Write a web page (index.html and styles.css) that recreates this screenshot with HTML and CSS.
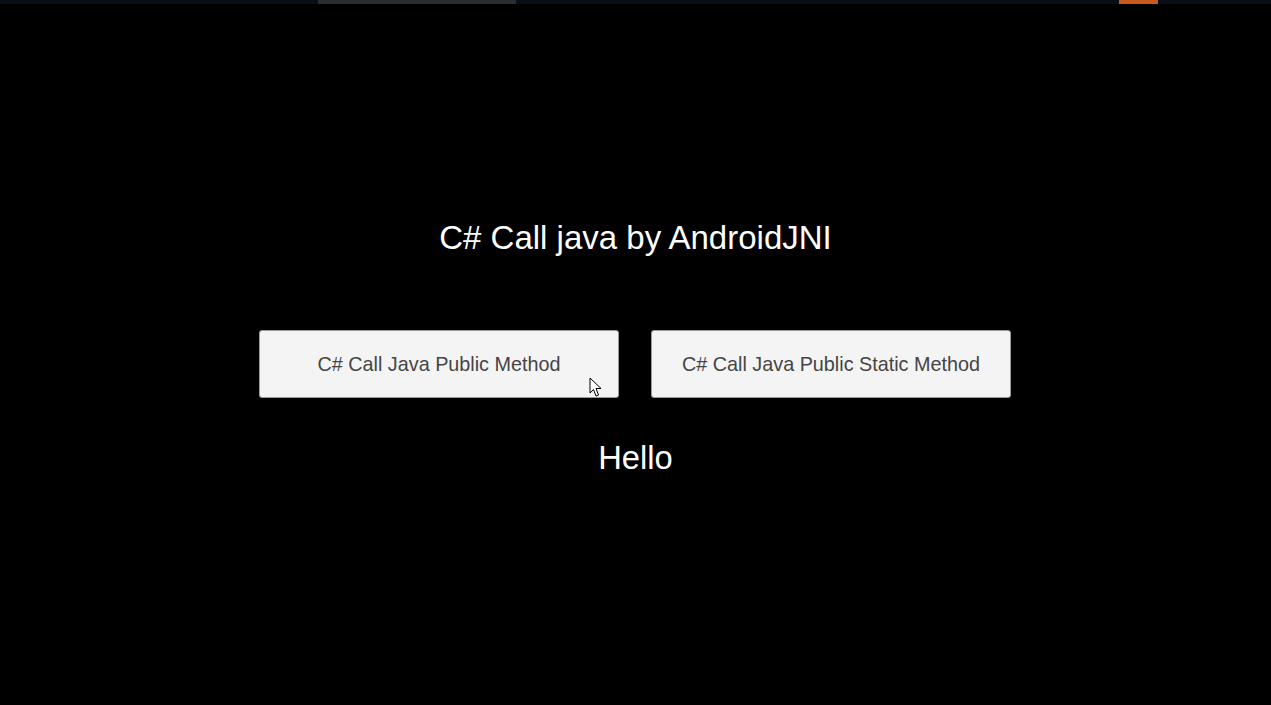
FILE: index.html
```html
<!DOCTYPE html>
<html>
<head>
<meta charset="utf-8">
<link rel="stylesheet" href="styles.css">
</head>
<body>
<div class="topbar">
  <div class="seg seg-a"></div>
  <div class="seg seg-gray"></div>
  <div class="seg seg-b"></div>
  <div class="seg seg-orange"></div>
  <div class="seg seg-c"></div>
</div>
<main class="stage">
  <h1 class="title">C# Call java by AndroidJNI</h1>
  <div class="buttons">
    <button class="btn">C# Call Java Public Method</button>
    <button class="btn">C# Call Java Public Static Method</button>
  </div>
  <div class="result">Hello</div>
</main>
<svg class="cursor" width="14" height="22" viewBox="0 0 14 22">
  <path d="M1 1 L1 16 L4.5 12.5 L7 19 L9.5 18 L7 11.5 L12 11.5 Z" fill="#fff" stroke="#000" stroke-width="1" stroke-linejoin="round"/>
</svg>
</body>
</html>
```
FILE: styles.css
```css
html, body {
  margin: 0;
  padding: 0;
  background: #000;
  height: 100%;
  overflow: hidden;
  font-family: "Liberation Sans", Arial, sans-serif;
}
.topbar {
  display: flex;
  height: 4px;
  background: #0a0f16;
}
.seg-a { width: 318px; }
.seg-gray { width: 198px; background: #2b2e31; }
.seg-b { width: 603px; }
.seg-orange { width: 39px; background: #c85a20; }
.seg-c { flex: 1; }
.stage {
  display: flex;
  flex-direction: column;
  align-items: center;
}
.title {
  margin: 214px 0 0;
  font-weight: normal;
  font-size: 33px;
  line-height: 40px;
  color: #fff;
}
.buttons {
  display: flex;
  gap: 32px;
  margin: 72px 1px 0 0;
}
.btn {
  width: 360px;
  height: 68px;
  background: #f4f4f4;
  border: 1px solid #9a9a9a;
  border-radius: 3px;
  font-family: "Liberation Sans", Arial, sans-serif;
  font-size: 19.8px;
  color: #454545;
  padding: 0;
}
.result {
  margin-top: 40px;
  font-size: 32.7px;
  line-height: 40px;
  color: #fff;
}
.cursor {
  position: absolute;
  left: 589px;
  top: 377px;
}
```
